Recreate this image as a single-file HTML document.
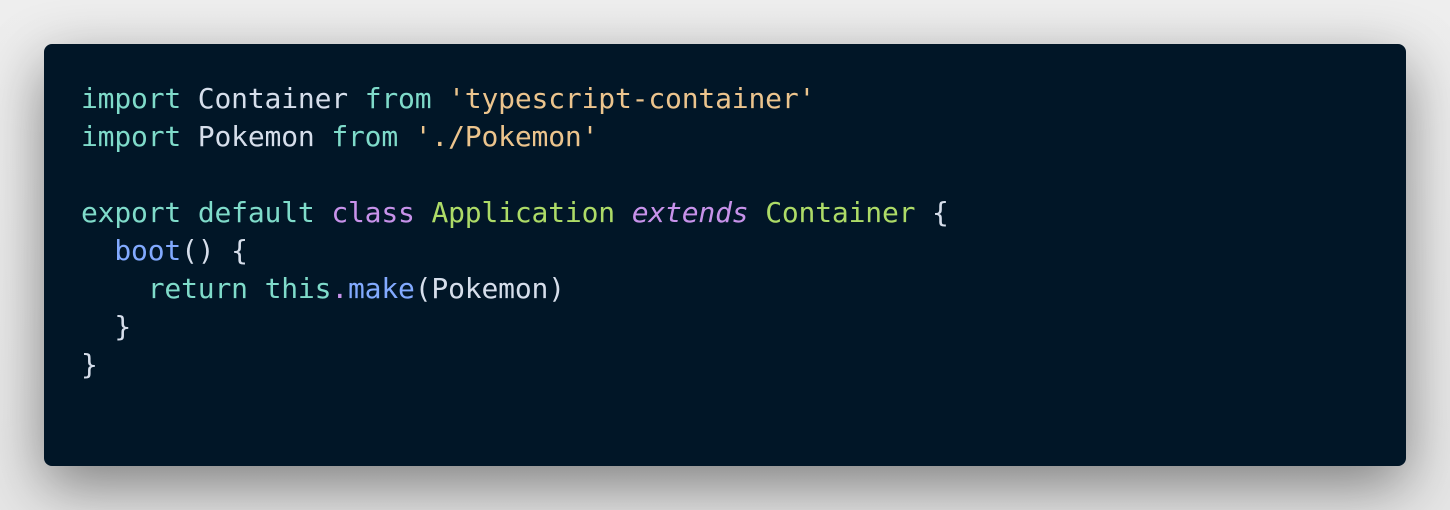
<!DOCTYPE html>
<html><head><meta charset="utf-8"><style>
html,body{margin:0;padding:0;width:1450px;height:510px;overflow:hidden;background:linear-gradient(#eeeeee,#e6e6e6);}
.card{position:absolute;left:44px;top:44px;width:1362px;height:422px;background:#011627;border-radius:8px;box-shadow:0 20px 60px rgba(0,0,0,0.45);}
pre{position:absolute;left:81px;top:80px;margin:0;font-family:"DejaVu Sans Mono","Liberation Mono",monospace;font-size:28px;line-height:38px;color:#d6deeb;letter-spacing:-0.17px;}
.k{color:#7fdbca}.s{color:#ecc48d}.c{color:#c792ea}.n{color:#addb67}.f{color:#82aaff}.i{color:#c792ea;font-style:italic}
</style></head><body>
<div class="card"></div>
<pre><span class="k">import</span> Container <span class="k">from</span> <span class="s">'typescript-container'</span>
<span class="k">import</span> Pokemon <span class="k">from</span> <span class="s">'./Pokemon'</span>

<span class="k">export</span> <span class="k">default</span> <span class="c">class</span> <span class="n">Application</span> <span class="i">extends</span> <span class="n">Container</span> {
  <span class="f">boot</span>() {
    <span class="k">return</span> <span class="k">this</span><span class="c">.</span><span class="f">make</span>(Pokemon)
  }
}</pre>
</body></html>
